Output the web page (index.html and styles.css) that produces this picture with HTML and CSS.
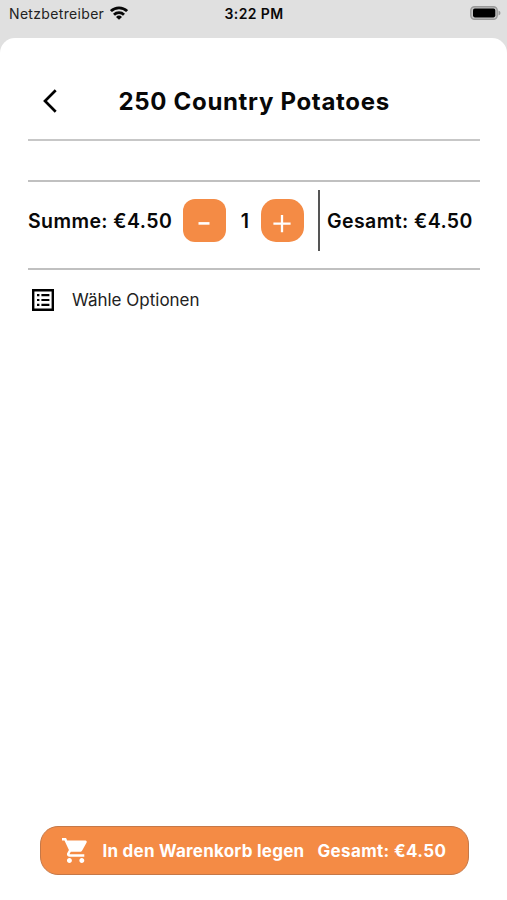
FILE: index.html
```html
<!DOCTYPE html>
<html lang="de">
<head>
<meta charset="utf-8">
<meta name="viewport" content="width=device-width, initial-scale=1">
<title>250 Country Potatoes</title>
<link rel="stylesheet" href="styles.css">
</head>
<body>
<div class="status">
  <div class="carrier"><span>Netzbetreiber</span>
    <svg class="wifi" viewBox="0 0 18 14" fill="none" stroke="#080808" stroke-width="2.8"><path d="M.9 5.1a11.6 11.6 0 0 1 16.200 0M4 8.700a7.100 7.100 0 0 1 10 0"/><path d="M9 13.700 6 10.900a4.300 4.300 0 0 1 6 0z" fill="#080808" stroke="none"/></svg>
  </div>
  <time class="clock">3:22 PM</time>
  <svg class="battery" viewBox="0 0 31 14"><rect x=".8" y=".7" width="26.4" height="12.6" rx="3.8" fill="#c4c4c4" stroke="#999" stroke-width="1.4"/><rect x="3" y="2.6" width="22.3" height="8.8" rx="1.8" fill="#000"/><path d="M28.5 4.5q2 .8 2 2.5t-2 2.5z" fill="#999"/></svg>
</div>
<main class="sheet">
  <header class="header">
    <svg class="back" viewBox="0 0 14 24" fill="none" stroke="#000" stroke-width="2.7"><path d="M12.7 1.2 2 12l10.7 10.8"/></svg>
    <h1 class="title">250 Country Potatoes</h1>
  </header>
  <div class="spacer"></div>
  <section class="amount">
    <span class="sum">Summe: €4.50</span>
    <button class="step minus" aria-label="-"><svg viewBox="0 0 43 43"><path d="M15.5 24.4h11" stroke="#fff" stroke-width="2.6"/></svg></button>
    <span class="count">1</span>
    <button class="step plus" aria-label="+"><svg viewBox="0 0 43 43"><path d="M12.4 24.6h17.2M21 16v17.2" stroke="#fff" stroke-width="2.3"/></svg></button>
    <span class="total"><span>Gesamt: €4.50</span></span>
  </section>
  <div class="options">
    <svg class="list" viewBox="0 0 22 22"><path d="M1.2 1.2h19.6v19.6H1.2z" fill="none" stroke="#000" stroke-width="2.4"/><path d="M5 6.2h2.4M5 11h2.4M5 15.8h2.4M9.4 6.2h8M9.4 11h8M9.4 15.8h8" stroke="#000" stroke-width="2.2"/></svg>
    <span class="choose">Wähle Optionen</span>
  </div>
  <button class="cart">
    <svg class="trolley" viewBox="1 2 21 20" fill="#fff"><path d="M7 18c-1.1 0-1.99.9-1.99 2S5.9 22 7 22s2-.9 2-2-.9-2-2-2zM1 2v2h2l3.6 7.59-1.35 2.45c-.16.28-.25.61-.25.96 0 1.1.9 2 2 2h12v-2H7.42c-.14 0-.25-.11-.25-.25l.03-.12.9-1.63h7.45c.75 0 1.41-.41 1.75-1.03l3.58-6.49A1 1 0 0 0 20 4H5.21l-.94-2H1zm16 16c-1.1 0-1.99.9-1.99 2s.89 2 1.99 2 2-.9 2-2-.9-2-2-2z"/></svg>
    <span class="add">In den Warenkorb legen</span>
    <span class="cart-total">Gesamt: €4.50</span>
  </button>
</main>
</body>
</html>
```
FILE: styles.css
```css
* { box-sizing: border-box; }
body {
  margin: 0;
  height: 900px;
  display: flex;
  flex-direction: column;
  background: #e0e0e0;
  color: #080808;
  font-family: Inter, "Liberation Sans", sans-serif;
  white-space: nowrap;
  overflow: hidden;
}
button { border: 0; padding: 0; font: inherit; color: #fff; background: #f48b45; }
svg { display: block; flex: none; }
.status {
  height: 37.5px;
  padding: 4px 7px 0 9px;
  display: grid;
  grid-template-columns: 215.5px 1fr 30px;
  align-items: start;
  font-size: 14px;
  line-height: 20px;
}
.carrier { display: flex; gap: 6px; color: #222; letter-spacing: .33px; }
.carrier span { width: 95px; }
.wifi { width: 18px; height: 14px; margin-top: 2px; }
.clock { font-weight: 600; letter-spacing: .4px; }
.battery { width: 31px; height: 14px; margin-top: 2px; }
.sheet {
  flex: 1;
  display: flex;
  flex-direction: column;
  padding: 0 27px 25px 28px;
  background: #fff;
  border-radius: 15px 15px 0 0;
}
.header {
  height: 103.5px;
  padding: 0 0 0 14px;
  display: flex;
  align-items: center;
  border-bottom: 2px solid #c7c7c7;
}
.back { width: 14px; height: 24px; margin: 25px 0 0 1px; }
.title { margin: 27px 0 0 61.5px; font-size: 24px; line-height: 30px; font-weight: 650; letter-spacing: .68px; }
.spacer { height: 41px; border-bottom: 2px solid #c0c0c0; }
.amount {
  height: 87.5px;
  display: flex;
  align-items: flex-start;
  padding-top: 8px;
  border-bottom: 2px solid #c0c0c0;
  font-size: 19.5px;
  line-height: 62px;
  font-weight: 600;
  letter-spacing: .42px;
}
.sum { width: 155px; }
.step { width: 43px; height: 43px; margin-top: 9px; border-radius: 12px; }
.plus { border-radius: 15px; }
.count { width: 35px; text-align: center; padding-left: 3px; }
.total { height: 61px; margin-left: 14px; padding-left: 7px; border-left: 2px solid #555; }
.options { height: 61px; display: flex; align-items: center; padding-left: 3.5px; }
.list { width: 22px; height: 22px; }
.choose { margin-left: 18.5px; font-size: 17px; color: #222; }
.cart {
  width: 429px;
  height: 49px;
  margin: auto 0 0 11.5px;
  padding-left: 21px;
  display: flex;
  align-items: center;
  border: 1.5px solid #c57848;
  border-radius: 18px;
  font-size: 17px;
  font-weight: 700;
  letter-spacing: .24px;
}
.trolley { width: 26px; height: 25px; }
.add { width: 202px; margin-left: 15px; text-align: left; }
.cart-total { margin-left: 13px; letter-spacing: .35px; }
```
